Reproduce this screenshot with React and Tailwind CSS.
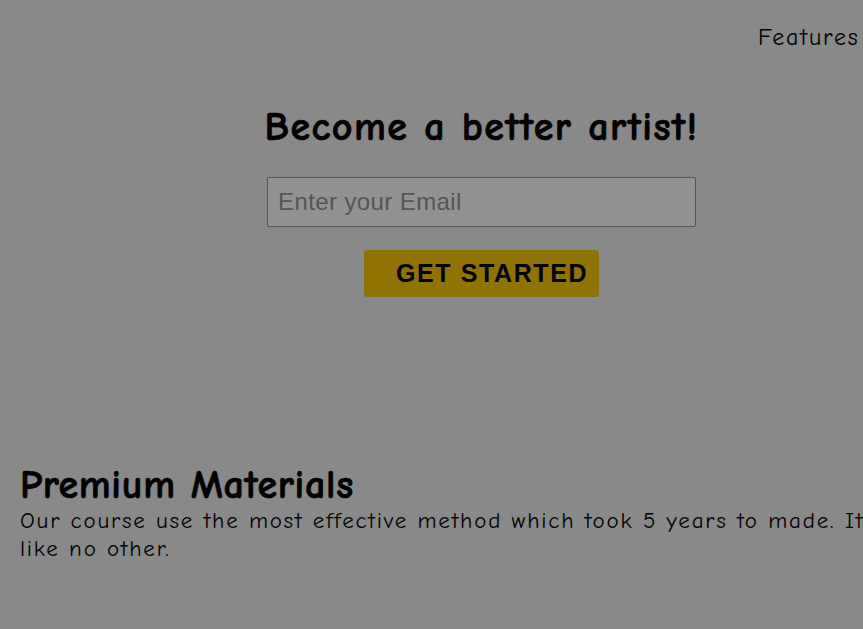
export default function App() {
  return (
    <div
      className="w-[963px] min-h-[629px] bg-[#898989] text-black overflow-hidden"
      style={{ fontFamily: '"Comic Sans MS", "Comic Neue", cursive' }}
    >
      {/* NAV */}
      <nav className="flex gap-8 pl-[758px] pt-[22px] text-[24px] leading-[30px] tracking-[1.8px]">
        <a href="#features">Features</a>
        <a href="#pricing">Pricing</a>
      </nav>

      {/* HERO */}
      <section className="flex flex-col items-center pt-[50px]">
        <h1 className="text-[40px] font-bold leading-[50px] tracking-[1.5px] [-webkit-text-stroke:0.7px_black]">
          Become a better artist!
        </h1>

        <input
          type="email"
          placeholder="Enter your Email"
          className="mt-[25px] w-[429px] h-[50px] px-[10px] bg-[#929292] border border-[#555555] rounded-[2px] text-[24px] tracking-[0.4px] placeholder:text-[#555555] outline-none"
          style={{ fontFamily: '"Liberation Sans", Arial, sans-serif' }}
        />

        <button
          className="mt-[23px] w-[235px] h-[47px] pl-[32px] pr-[6px] bg-[#8f7200] rounded-[3px] text-[25px] tracking-[1.6px] font-bold text-black text-left whitespace-nowrap"
          style={{ fontFamily: '"Liberation Sans", Arial, sans-serif' }}
        >
          GET STARTED
        </button>
      </section>

      {/* FEATURES */}
      <section className="mt-[166px] px-[20px]">
        <h2 className="text-[40px] font-bold leading-[44px] tracking-[0.7px] [-webkit-text-stroke:0.7px_black]">
          Premium Materials
        </h2>
        <p className="max-w-[895px] text-[23px] leading-[28px] tracking-[1.8px]">
          Our course use the most effective method which took 5 years to made. It is like no other.
        </p>
      </section>
    </div>
  );
}
